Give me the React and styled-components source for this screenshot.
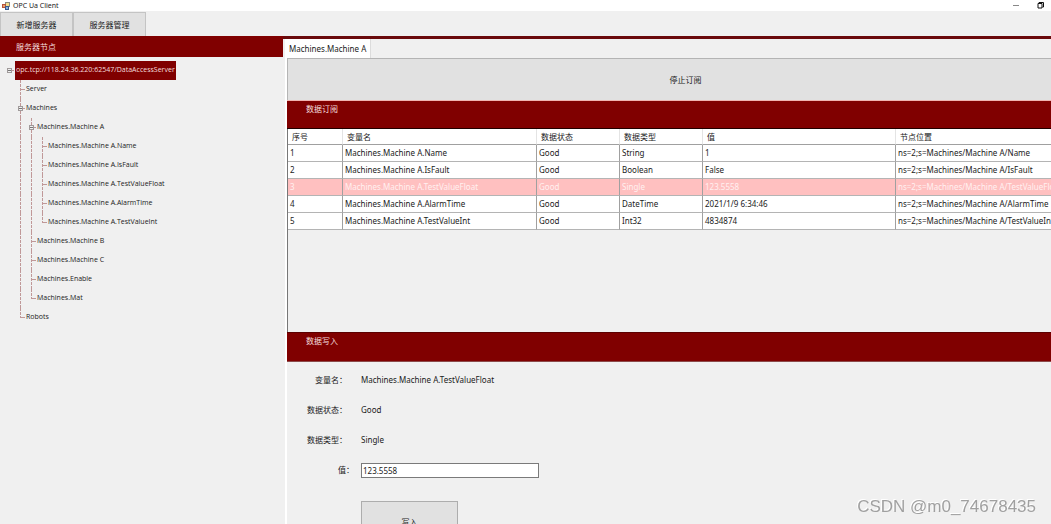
import React, { useState } from "react";
import styled, { createGlobalStyle, css } from "styled-components";

const maroon = "#800000";
const surface = "#f0f0f0";

const GlobalStyle = createGlobalStyle`
  *, *::before, *::after { box-sizing: border-box; }
  body {
    margin: 0;
    background: ${surface};
    color: #1a1a1a;
    font: 8px/12px "Noto Sans", "Noto Sans CJK SC", sans-serif;
  }
  button, input { font: inherit; color: inherit; }
`;

const Window = styled.div`
  display: flex;
  flex-direction: column;
  height: 100vh;
  overflow: hidden;
`;

const TitleBar = styled.header`
  display: flex;
  align-items: center;
  flex: none;
  height: 11px;
  padding: 0 7px 0 2px;
  background: #fff;
  font-size: 7px;
  line-height: 10px;
`;

const Title = styled.h1`
  flex: 1;
  margin: 0 0 0 3px;
  font: inherit;
`;

const CaptionButton = styled.button`
  display: flex;
  margin-left: 18px;
  padding: 0;
  border: 0;
  background: none;
`;

const Toolbar = styled.nav`
  display: flex;
  flex: none;
  height: 25px;
  padding-top: 1px;
`;

const ToolButton = styled.button`
  width: 73px;
  padding: 0;
  border: 1px solid #c4c4c4;
  border-bottom: 0;
  background: #e1e1e1;
`;

const Body = styled.div`
  display: flex;
  flex: 1;
  min-height: 0;
`;

const Sidebar = styled.aside`
  flex: none;
  width: 283px;
`;

const SidebarHeading = styled.h2`
  margin: 0;
  padding: 5px 16px 4px;
  background: ${maroon};
  color: #f3dede;
  font: inherit;
`;

const Tree = styled.ul`
  margin: 0;
  padding: 4px 0 0 4px;
  list-style: none;
  font-family: "Open Sans", "Noto Sans CJK SC", sans-serif;
  font-size: 7px;
`;

const TreeRow = styled.li`
  display: flex;
  height: 19px;
`;

const line = "#c09898";
const dashDown = `repeating-linear-gradient(to bottom, ${line} 0 3px, transparent 3px 4px)`;
const dashAcross = `linear-gradient(${line}, ${line})`;

const Guide = styled.span`
  display: grid;
  place-items: center;
  width: 11px;
  background-repeat: no-repeat;
  ${(p) =>
    p.$kind === "through" &&
    css`
      background-image: ${dashDown};
      background-size: 1px 100%;
      background-position: 5px 0;
    `}
  ${(p) =>
    p.$kind === "tee" &&
    css`
      background-image: ${dashDown}, ${dashAcross};
      background-size: 1px 100%, 4px 1px;
      background-position: 5px 0, 6px 9px;
    `}
  ${(p) =>
    p.$kind === "corner" &&
    css`
      background-image: ${dashDown}, ${dashAcross};
      background-size: 1px 10px, 4px 1px;
      background-position: 5px 0, 6px 9px;
    `}
  ${(p) =>
    p.$kind === "root" &&
    css`
      background-image: ${dashAcross};
      background-size: 4px 1px;
      background-position: 6px 9px;
    `}
`;

const Toggle = styled.button`
  display: grid;
  place-items: center;
  width: 5px;
  height: 5px;
  padding: 0;
  border: 1px solid #a09a9a;
  background: ${surface};

  &::before {
    content: "";
    width: 3px;
    height: 1px;
    background: #777;
  }
`;

const NodeLabel = styled.span`
  line-height: 18px;
  white-space: nowrap;
  ${(p) =>
    p.$selected &&
    css`
      padding: 0 1px;
      background: ${maroon};
      color: #f3dede;
    `}
`;

const Main = styled.main`
  display: flex;
  flex-direction: column;
  flex: 1;
  min-width: 0;
  padding-left: 2px;
  border-top: 3px solid #6a0a0c;
`;

const TabStrip = styled.div`
  flex: none;
  height: 19px;
`;

const Tab = styled.button`
  height: 19px;
  padding: 0 4px;
  border: 0;
  border-right: 1px solid #dcdcdc;
  background: #fff;
`;

const Page = styled.section`
  display: flex;
  flex-direction: column;
  flex: 1;
  border-left: 2px solid #fff;
`;

const StopButton = styled.button`
  flex: none;
  height: 42px;
  padding: 0 0 0 32px;
  border: 1px solid #b4b4b4;
  border-width: 1px 0 0 1px;
  background: #e1e1e1;
`;

const SectionHeading = styled.h2`
  flex: none;
  height: ${(p) => (p.$tall ? 30 : 29)}px;
  margin: 0;
  padding: 2px 19px;
  border: solid;
  border-width: 1px 0;
  border-color: ${(p) => (p.$tall ? "#5c0000 transparent #8c4a4a" : "#f0b4b0 transparent #200000")};
  background: ${maroon};
  color: #f3dede;
  font: inherit;
`;

const GridArea = styled.div`
  flex: none;
  height: 203px;
  overflow: hidden;
  border-left: 1px solid #777;
`;

const Grid = styled.table`
  width: 100%;
  table-layout: fixed;
  border-collapse: separate;
  border-spacing: 0;
`;

const HeadCell = styled.th`
  width: ${(p) => (p.$width ? `${p.$width}px` : "auto")};
  height: 16px;
  padding: 0 4px;
  border-right: 1px solid #e4e4e4;
  border-bottom: 1px solid #a0a0a0;
  background: #fff;
  font-weight: 400;
  text-align: left;

  &:last-child { border-right: 0; }
`;

const Cell = styled.td`
  height: 17px;
  padding: 0 2px;
  overflow: hidden;
  border-right: 1px solid #a0a0a0;
  border-bottom: 1px solid #b4b4b4;
  background: #fff;
  white-space: nowrap;

  &:last-child {
    padding-right: 0;
    border-right: 0;
  }
`;

const GridRow = styled.tr`
  ${(p) =>
    p.$selected &&
    css`
      ${Cell} {
        background: #ffc0c0;
        color: #fff0f0;
      }
    `}
`;

const Form = styled.form`
  display: flex;
  flex-direction: column;
  padding-top: 3px;
`;

const Field = styled.div`
  display: grid;
  grid-template-columns: 74px 1fr;
  align-items: center;
  height: 30px;
`;

const FieldLabel = styled.label`
  padding-right: ${(p) => (p.$close ? 7 : 14)}px;
  text-align: right;
`;

const ValueInput = styled.input`
  width: 178px;
  height: 15px;
  padding: 0 1px;
  border: 1px solid #7a7a7a;
  background: #fff;
`;

const WriteButton = styled.button`
  width: 97px;
  height: 42px;
  margin: 16px 0 0 74px;
  padding: 0;
  border: 1px solid #adadad;
  background: #e1e1e1;
`;

const Watermark = styled.div`
  position: fixed;
  right: 15px;
  bottom: 7px;
  color: #a0a0a0;
  font: 17px/20px "Liberation Sans", sans-serif;
  text-shadow: -1px -1px 0 #fff;
  pointer-events: none;
`;

const nodes = [
  { label: "opc.tcp://118.24.36.220:62547/DataAccessServer", guides: ["root"], open: true, selected: true },
  { label: "Server", guides: ["none", "tee"] },
  { label: "Machines", guides: ["none", "tee"], open: true },
  { label: "Machines.Machine A", guides: ["none", "through", "tee"], open: true },
  { label: "Machines.Machine A.Name", guides: ["none", "through", "through", "tee"] },
  { label: "Machines.Machine A.IsFault", guides: ["none", "through", "through", "tee"] },
  { label: "Machines.Machine A.TestValueFloat", guides: ["none", "through", "through", "tee"] },
  { label: "Machines.Machine A.AlarmTime", guides: ["none", "through", "through", "tee"] },
  { label: "Machines.Machine A.TestValueInt", guides: ["none", "through", "through", "corner"] },
  { label: "Machines.Machine B", guides: ["none", "through", "tee"] },
  { label: "Machines.Machine C", guides: ["none", "through", "tee"] },
  { label: "Machines.Enable", guides: ["none", "through", "tee"] },
  { label: "Machines.Mat", guides: ["none", "through", "corner"] },
  { label: "Robots", guides: ["none", "corner"] },
];

const columns = [
  ["序号", 55],
  ["变量名", 194],
  ["数据状态", 83],
  ["数据类型", 83],
  ["值", 193],
  ["节点位置"],
];

const rows = [
  ["1", "Machines.Machine A.Name", "Good", "String", "1", "ns=2;s=Machines/Machine A/Name"],
  ["2", "Machines.Machine A.IsFault", "Good", "Boolean", "False", "ns=2;s=Machines/Machine A/IsFault"],
  ["3", "Machines.Machine A.TestValueFloat", "Good", "Single", "123.5558", "ns=2;s=Machines/Machine A/TestValueFloat"],
  ["4", "Machines.Machine A.AlarmTime", "Good", "DateTime", "2021/1/9 6:34:46", "ns=2;s=Machines/Machine A/AlarmTime"],
  ["5", "Machines.Machine A.TestValueInt", "Good", "Int32", "4834874", "ns=2;s=Machines/Machine A/TestValueInt"],
];

function AppIcon() {
  return (
    <svg width="8" height="8" viewBox="0 0 8 8" aria-hidden="true">
      <rect x="3" y="0" width="5" height="5" fill="#8a8a80" />
      <rect x="4" y="1" width="3" height="3" fill="#f2dc8c" />
      <rect x="0" y="2" width="4" height="4" fill="#b5523a" />
      <rect x="1" y="3" width="2" height="2" fill="#e8a070" />
      <rect x="3" y="4" width="4" height="4" fill="#38588c" />
      <rect x="4" y="5" width="2" height="2" fill="#88b0dc" />
    </svg>
  );
}

export default function App() {
  const [value, setValue] = useState("123.5558");
  return (
    <Window>
      <GlobalStyle />
      <TitleBar>
        <AppIcon />
        <Title>OPC Ua Client</Title>
        <CaptionButton aria-label="Minimize">
          <svg width="6" height="6" viewBox="0 0 6 6">
            <rect x="0" y="2" width="6" height="1" fill="#888" />
          </svg>
        </CaptionButton>
        <CaptionButton aria-label="Restore">
          <svg width="7" height="7" viewBox="0 0 7 7">
            <path d="M2 1.5V.5H6.5V5H5.5M1 1.5H5V6H1Z" fill="none" stroke="#111" />
          </svg>
        </CaptionButton>
      </TitleBar>
      <Toolbar>
        <ToolButton>新增服务器</ToolButton>
        <ToolButton>服务器管理</ToolButton>
      </Toolbar>
      <Body>
        <Sidebar>
          <SidebarHeading>服务器节点</SidebarHeading>
          <Tree>
            {nodes.map((node) => (
              <TreeRow key={node.label}>
                {node.guides.map((kind, i) => (
                  <Guide key={i} $kind={kind}>
                    {node.open && i === node.guides.length - 1 && <Toggle aria-label={`Collapse ${node.label}`} />}
                  </Guide>
                ))}
                <NodeLabel $selected={node.selected}>{node.label}</NodeLabel>
              </TreeRow>
            ))}
          </Tree>
        </Sidebar>
        <Main>
          <TabStrip>
            <Tab>Machines.Machine A</Tab>
          </TabStrip>
          <Page>
            <StopButton>停止订阅</StopButton>
            <SectionHeading>数据订阅</SectionHeading>
            <GridArea>
              <Grid>
                <thead>
                  <tr>
                    {columns.map(([name, width]) => (
                      <HeadCell key={name} $width={width}>{name}</HeadCell>
                    ))}
                  </tr>
                </thead>
                <tbody>
                  {rows.map((row) => (
                    <GridRow key={row[0]} $selected={row[0] === "3"}>
                      {row.map((text, i) => (
                        <Cell key={i}>{text}</Cell>
                      ))}
                    </GridRow>
                  ))}
                </tbody>
              </Grid>
            </GridArea>
            <SectionHeading $tall>数据写入</SectionHeading>
            <Form onSubmit={(e) => e.preventDefault()}>
              <Field>
                <FieldLabel as="span">变量名：</FieldLabel>
                <span>Machines.Machine A.TestValueFloat</span>
              </Field>
              <Field>
                <FieldLabel as="span">数据状态：</FieldLabel>
                <span>Good</span>
              </Field>
              <Field>
                <FieldLabel as="span">数据类型：</FieldLabel>
                <span>Single</span>
              </Field>
              <Field>
                <FieldLabel htmlFor="value" $close>值：</FieldLabel>
                <ValueInput id="value" value={value} onChange={(e) => setValue(e.target.value)} />
              </Field>
              <WriteButton type="submit">写入</WriteButton>
            </Form>
          </Page>
        </Main>
      </Body>
      <Watermark>CSDN @m0_74678435</Watermark>
    </Window>
  );
}
